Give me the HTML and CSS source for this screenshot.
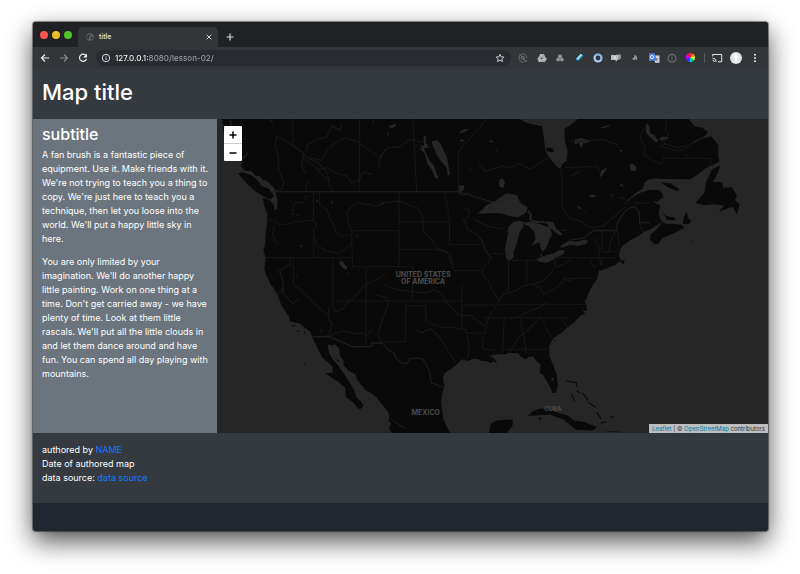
FILE: index.html
```html
<!DOCTYPE html>
<html lang="en">
<head>
<meta charset="utf-8">
<title>title</title>
<link rel="stylesheet" href="styles.css">
</head>
<body>
<div class="window">
  <div class="tabbar">
    <div class="lights"><button class="light red" aria-label="Close window"></button><button class="light yellow" aria-label="Minimize"></button><button class="light green" aria-label="Zoom window"></button></div>
    <div class="tab">
      <svg class="favicon" viewBox="0 0 16 16"><circle cx="8" cy="8" r="7.5" fill="#5d6064"/><path d="M2 5l4-2 3 1-1 3-3 1 1 3-2 2-2-3zM10 8l4-1-1 4-3 2-1-3z" fill="#303438"/></svg>
      <span class="tab-title">title</span>
      <button class="plain tab-close" aria-label="Close tab"><svg viewBox="0 0 8 8"><path d="M1.7 1.7l4.6 4.6M6.3 1.7L1.7 6.3" stroke="#d0d2d4" fill="none"/></svg></button>
    </div>
    <button class="plain new-tab" aria-label="New tab"><svg viewBox="0 0 10 10"><path d="M5 1.5v7M1.5 5h7" stroke="#d8dadc" stroke-width="1.2"/></svg></button>
  </div>
  <div class="toolbar">
    <div class="nav">
      <button class="plain icon" aria-label="Back"><svg viewBox="0 0 14 14"><path d="M11 7H3.5M7 3.5L3.5 7 7 10.500" fill="none" stroke="#eee" stroke-width="1.2"/></svg></button>
      <button class="plain icon" aria-label="Forward"><svg viewBox="0 0 14 14"><path d="M3 7h7.500M7 3.500L10.500 7 7 10.500" fill="none" stroke="#84878a" stroke-width="1.1"/></svg></button>
      <button class="plain icon" aria-label="Reload"><svg viewBox="0 0 14 14"><path d="M10 4.600A3.600 3.600 0 1 0 10.500 8" fill="none" stroke="#eee" stroke-width="1.2"/><path d="M11 2.500v4H7z" fill="#eee"/></svg></button>
    </div>
    <div class="omnibox">
      <svg class="info" viewBox="0 0 10 10"><circle cx="5" cy="5" r="3.700" fill="none" stroke="#d5d7d9"/><path d="M5 4.500V7M5 2.700v1" stroke="#d5d7d9"/></svg>
      <input class="address" type="text" aria-label="Address" value="127.0.0.1:8080/lesson-02/">
      <button class="plain icon" aria-label="Bookmark"><svg viewBox="0 0 14 14"><path d="M7 3.200l1.100 2.600 2.800.2-2.100 1.800.6 2.800L7 9.100l-2.400 1.500.6-2.800L3.100 6l2.800-.2z" fill="none" stroke="#d8dadc" stroke-width=".9"/></svg></button>
    </div>
    <div class="extensions">
      <button class="plain icon" aria-label="Search extension"><svg viewBox="0 0 14 14" fill="none" stroke="#66696c"><path d="M10.500 9A4 4 0 1 1 11 7M3 3l8 8"/><circle cx="7" cy="7" r="1.500"/></svg></button>
      <button class="plain icon" aria-label="Drive"><svg viewBox="0 0 14 14"><path d="M5.300 3h3.500l2.900 5-1.700 3H4L2.300 8z" fill="#a8a8a8"/><path d="M7 5.500L5.500 8h3z" fill="#4a4c4e"/><path d="M5.300 3l3 5.200h3.400M5.500 8.200L4 11" fill="none" stroke="#d8d8d8" stroke-width=".6"/></svg></button>
      <button class="plain icon" aria-label="Clusters"><svg viewBox="0 0 14 14" fill="#929496"><circle cx="7" cy="5.300" r="1.900"/><circle cx="5.200" cy="8.500" r="1.900"/><circle cx="8.800" cy="8.500" r="1.900"/></svg></button>
      <button class="plain icon" aria-label="Pen"><svg viewBox="0 0 14 14"><path d="M9 2.700l2.300 1.800L6.500 9.600 3.800 8.200z" fill="#35b8e6"/><path d="M9 2.700l1 .8-4.800 5.300-1.400-.6z" fill="#b9ecff"/><path d="M3.800 8.200l2.700 1.400-3.500 1.600z" fill="#15517a"/></svg></button>
      <button class="plain icon" aria-label="Ring"><svg viewBox="0 0 14 14"><circle cx="7" cy="7" r="3.500" fill="none" stroke="#a9cff5" stroke-width="2.200"/><path d="M4.200 4.500A3.700 3.700 0 0 1 10 9" fill="none" stroke="#6fa3d8"/></svg></button>
      <button class="plain icon" aria-label="Messages"><svg viewBox="0 0 14 14"><path d="M7 3.500h5v4.300h-1V9L9.500 7.800H7z" fill="#8d8f91"/><path d="M2 4h7.500v5H8v1.500L5.700 9H2z" fill="#bbbcbd"/><circle cx="6" cy="6.500" r="1.200" fill="#e5e5e5"/></svg></button>
      <button class="plain icon" aria-label="Flame"><svg viewBox="0 0 14 14"><path d="M6.800 3.500c2 2 3 3.200 2.300 5L8 9V6.800L7 9H5.300L4.200 7.500l1-1 .6.7z" fill="#96989a"/></svg></button>
      <button class="plain icon" aria-label="Translate"><svg viewBox="0 0 14 14"><path d="M6.500 4.500h6v7.300H8z" fill="#d5d8db"/><path d="M2 2.300h5.500L10 9.700H2z" fill="#4a82ee"/><circle cx="5" cy="6" r="1.600" fill="none" stroke="#fff" stroke-width=".8"/><path d="M8.500 7.500h3M10 7v1l-1.200 2M9.500 8l2 2" fill="none" stroke="#6b7075" stroke-width=".6"/></svg></button>
      <button class="plain icon" aria-label="Page info"><svg viewBox="0 0 14 14" fill="none" stroke="#727578"><circle cx="7" cy="7.300" r="4"/><path d="M7 6.500v3M7 4.600v1"/></svg></button>
      <button class="plain icon" aria-label="Colour picker"><span class="wheel"></span></button>
    </div>
    <span class="divider"></span>
    <div class="tools">
      <button class="plain icon" aria-label="Cast"><svg viewBox="0 0 14 14" fill="none" stroke="#e4e5e6"><path d="M2.700 5.500v-2h9v7.300H8M2.500 7.200A3.700 3.700 0 0 1 6.200 11M2.500 9.200A1.800 1.800 0 0 1 4.300 11"/></svg></button>
      <button class="plain icon" aria-label="Profile"><svg viewBox="0 0 14 14"><circle cx="7" cy="7" r="6" fill="#e3e3e3"/><path d="M5 3.500c3-1.200 5 .6 4 3.400L8 8.500v2.200H6.400V8C4.900 7 4.200 5 5 3.500z" fill="#fff"/></svg></button>
      <button class="plain icon" aria-label="Menu"><svg viewBox="0 0 14 14" fill="#e6e7e8"><circle cx="7" cy="3.800" r="1"/><circle cx="7" cy="7" r="1"/><circle cx="7" cy="10.200" r="1"/></svg></button>
    </div>
  </div>
  <header class="page-header"><h1>Map title</h1></header>
  <main class="content">
    <aside class="sidebar">
      <h2>subtitle</h2>
      <p>A fan brush is a fantastic piece of equipment. Use it. Make friends with it. We're not trying to teach you a thing to copy. We're just here to teach you a technique, then let you loose into the world. We'll put a happy little sky in here.</p>
      <p>You are only limited by your imagination. We'll do another happy little painting. Work on one thing at a time. Don't get carried away - we have plenty of time. Look at them little rascals. We'll put all the little clouds in and let them dance around and have fun. You can spend all day playing with mountains.</p>
    </aside>
    <section class="map">
      <svg class="tiles" viewBox="21 14 1653 942" preserveAspectRatio="xMidYMid slice">
        <!-- mainland -->
        <path class="land" d="M36 14L42 70 66 130 98 132 92 155 104 169 126 172 134 184 150 186 158 198 172 202 186 214 196 228 198 240 203 260 200 284 194 288 190 270 180 258 158 250 163 275 172 300 172 320 168 350 165 390 160 410 167 430 163 460 167 480 175 495 182 512 192 522 200 538 206 550 213 570 225 590 238 608 238 620 270 628 285 640 300 652 307 670 322 700 337 730 355 745 367 757 368 775 348 776 345 768 348 778 364 790 385 802 405 820 407 847 430 864 444 882 453 883 460 873 452 860 440 850 434 832 425 815 412 795 404 780 385 755 368 735 357 715 352 690 367 694 375 690 387 702 390 725 401 740 400 752 415 768 437 780 440 795 462 820 464 826 485 838 500 850 520 875 535 895 538 910 534 920 544 926 537 940 545 956 720 956 700 915 693 865 697 835 703 815 698 790 705 775 720 765 735 755 755 735 772 740 790 733 805 735 815 740 830 740 840 747 850 741 862 748 852 732 838 725 858 720 885 720 895 716 925 717 932 727 945 735 958 727 970 727 981 742 991 750 989 775 998 780 1010 800 1024 826 1027 836 1037 835 1043 815 1041 785 1030 755 1018 725 1017 695 1030 670 1055 655 1070 640 1090 625 1110 605 1125 598 1117 586 1130 590 1128 570 1118 548 1126 560 1140 525 1160 495 1167 467 1190 461 1216 452 1228 441 1240 450 1244 436 1234 441 1226 424 1232 402 1239 393 1262 376 1285 366 1300 353 1325 343 1358 321 1338 346 1320 362 1320 376 1332 389 1344 388 1358 370 1395 355 1422 341 1415 331 1390 328 1370 330 1355 322 1345 300 1350 273 1325 261 1340 262 1358 250 1356 236 1345 227 1320 226 1290 235 1265 250 1237 277 1217 301 1235 280 1255 255 1275 238 1298 222 1303 206 1315 196 1335 193 1370 194 1440 195 1464 180 1485 163 1528 142 1523 123 1525 94 1510 74 1502 66 1472 74 1436 94 1456 79 1484 66 1493 53 1475 40 1454 37 1435 14 1103 14 1080 33 1062 43 1065 85 1073 110 1069 140 1055 150 1051 166 1038 154 1027 142 1012 122 1005 105 1001 70 996 36 955 28 928 14Z"/>
        <!-- islands -->
        <path class="land" d="M85 178L98 174 126 184 142 198 154 214 178 224 192 245 180 256 158 245 135 230 118 215 96 192ZM1352 204L1380 207 1408 225 1400 230 1370 217ZM1357 294L1368 305 1396 310 1394 318 1370 316ZM1418 330L1420 310 1430 292 1433 311 1444 318 1436 329ZM1456 265L1483 235 1487 205 1506 165 1530 154 1522 178 1508 203 1535 204 1540 220 1565 219 1580 244 1574 258 1588 269 1580 301 1568 278 1554 281 1525 293 1542 274 1515 270 1480 273ZM1082 425L1100 420 1118 426ZM1165 465L1198 460 1170 469ZM836 956L842 928 862 918 888 916 908 915 907 935 890 956ZM952 905L970 890 990 882 1015 884 1048 897 1073 903 1092 918 1120 922 1160 938 1148 948 1098 946 1088 938 1060 916 1020 900ZM1178 950L1205 950 1246 954ZM982 912L992 908 992 917Z"/>
        <g fill="none" stroke="#080808" stroke-width="3">
          <path d="M1067 799L1100 805 1100 818M1083 837L1094 862M1100 828l10 10M1118 836l16 22M1134 863l22 16M1160 894l13 20M1172 926l16-3M1198 908l12-1M246 634h10M260 651h8M282 652l3 5M283 748v4M380 736l8 6M1443 379h3"/>
        </g>
        <!-- lakes and inlets -->
        <g class="water" transform="translate(540 0)">
          <path d="M124 82l18-5 10 12 8 18 10 20 5 28 6 25-8 5-3-24-15-18-13-16-8-18zM88 103l13-2 8 20 8 16 14 17 14 39-9-2-12-26-12-17-8-30zM100 68l8-5-1 21 10 16-20 3-8-9 13 1zM327 198l10-6 8 12-5 16-12-3zM263 298l27-26 25-12 34-23 31 5 11 24 21 12-3 16-24 15-25-3-22-8-15-2zM388 320l14 2-3 17-12 17-7 32-10 25 1 15-14 12-10-10-2-28 5-28 6-25 8-10-15 18 8-22 14-13zM405 324l20-2 22 6 21 8 12 5 6 20-10 18-3 12-7 12-10 10-5-14-4-15-8 3-15 7 12-20-3-20-16-18-16-7zM470 320l19 4 9 18 18 16-5 6-20-13-17-16zM439 434l22-9 24-6 24-12 15 1-3 10-24 14-27 13-24-3zM450 421l5-4 1 10-4-1zM510 396l25-17 24 3 24-6 12 3-8 10-23 6-22-3-29 8zM203 211l10 4 8-4 2 13-10 11-10-4 3-8zM8 31l10-1-5 9-11 2zM208 53l14-8 18 1-15 6-16 5zM208 75l18 3-12 5zM299 77l10 3v4h-10zM237 162l7 4-4 2zM316 107l9 2-7 2z"/>
          <path d="M414 290l9 12-3 14 12 6 28 1 20 6" fill="none" stroke="#262626" stroke-width="5"/>
        </g>
        <path class="land" d="M1007 100l20 2 5 8-8 5-14-5z"/>
        <g class="water">
          <path d="M386 442l10-2 16 20-4 7-12-8zM535 35l21-5 2 6-16 5zM531 58l5-6-1 18zM487 20l6 2-3 5zM267 396l12-4-3 6zM364 260h5l-1 12zM318 256l6 2-3 7zM257 480h3v7zM410 474l5 3-1 5zM330 646l8 5-4 3zM518 264l6 2-16 8zM437 362l6 2v6zM1025 791h5v9l-6-2z"/>
        </g>
        <g class="water" transform="translate(1080 0)">
          <path d="M14 76l20-5 22 8 12-2-14 8-15 2-5 16-8-17-12 5zM92 40l25-8 2 3-20 8zM88 192l5-22 16-10-2 9zM180 148l10 2 9 10-3 10-14-1-3-11zM57 242l14-1 8 6-17 2zM120 240l9 3-3 5zM148 214l8-7 2 8 10 5zM18 276l12 2 7 9-9-4zM43 292l5 4-2 4zM147 106l10 1-5 8zM228 28l8 6 5 24 12 5 10 15 14-11 20 3-13 9-18-2-8 8-22-20-9-10z"/>
        </g>
        <path d="M186 157l4 6-7-8z" class="land"/>
        <g class="inlet">
          <path d="M92 135l16-10 4-10M170 210l-4-16M182 222l-3-13M190 235l15-5M194 243l7 40M22 50l14 8M30 25l14 12M22 128l15 14M60 110l25-5M60 15l4 20M180 15l8 12"/>
        </g>
        <!-- state and province borders -->
        <g class="border">
          <path d="M248 14V90L278 115 282 135 316 157 331 178 353 192 360 218 368 230M449 14V232M172 313L195 319 208 332 233 328 250 323 272 321 307 317 320 330 311 345V430M167 430H423M310 232V325M329 232L329 270 352 288 359 315 371 330 377 352 393 365 425 360 427 457H568M427 349H568M311 360L320 392 350 410 385 417 405 405 427 385M250 430V508L356 605M368 430V580M468 457V695M368 560H755M307 668H356L429 697H485V686H517"/>
          <path d="M608 14L620 232M830 14L745 112V215L752 232 775 240 790 247 810 252 835 262 850 262M567 232V457M567 322H714M567 405H670L714 415M540 457H607V483M704 232L712 275 718 320 718 375 718 390 M718 391H820M718 415L722 425 729 465M730 469H818M607 483V560M755 510V645M755 572H855M587 560V682H518M587 574H647V620L670 630 700 640 720 638 756 645 768 646 768 656 776 690 776 715 772 732M768 656H822M820 610H1047L1080 612M867 570H1042L1130 570M882 610L878 715M930 610L946 695V715M945 705H1010M882 705H945"/>
          <path d="M820 391L822 405 840 430 835 445 820 456 817 480 833 500 845 525 858 545 867 560 855 580 840 600 830 625 825 655 815 680 820 705M820 705H852L852 725M895 440V520L887 540M950 438V508M842 418H890M895 438H985M1035 425V460L1060 450 1080 435M1036 430H1150M1060 492H1150M985 610L1000 620 1016 655 1035 680M1047 610L1075 640M960 508L990 520 1000 540 1040 520 1062 495 1077 500 1090 492"/>
          <path d="M1151 350H1216M1175 350V410M1195 410L1202 380 1215 350M1176 412H1228M1174 430H1218M1175 430V455M1150 370L1164 390 1171 450M1228 410L1226 385 1222 345M1288 302L1290 335 1300 350M1170 430L1140 430 1145 450 1160 460M1055 232L1055 280 1070 300 1080 312M1055 165V232M1065 160L1160 157 1171 180M1370 14L1365 45 1375 60 1358 80 1350 95 1370 102 1408 110 1445 94M1308 35L1290 60 1296 85 1305 100 1300 120 1330 140 1355 150 1360 132H1501V152"/>
        </g>
        <g class="border strong">
          <path d="M186 232H745M1055 348H1068M1080 377L1120 372 1151 348H1218L1222 325 1233 307 1248 288 1260 280 1275 278 1288 295 1288 325 1320 325M307 668L356 665 429 697H485V686H517L533 705 552 715 560 735 575 746 590 748 600 732 635 732 646 745 658 770 664 805 703 820M835 262L875 264M745 232L755 242 775 238 790 247 815 253 845 262"/>
        </g>
        <!-- rivers -->
        <g class="river">
          <path d="M295 198L288 210 290 235M200 66L196 90 205 125 207 170 222 205 215 225 195 229M200 66L225 78 250 97 275 110 290 130 325 145 348 170 360 205M278 125L275 152 288 180M288 110L295 90 320 75 350 68 365 35 390 48 396 28M295 130L332 138 344 125 352 105 382 82 404 72 442 82 480 110 510 128 530 102 567 96M317 167L350 160 380 178 410 185 425 205 445 198 462 172 488 182M510 160L505 145 525 105M270 303L245 300 250 280 255 264 280 265 292 242M195 332L188 355 193 380 205 392M427 355L415 330 411 290 440 265 470 270 500 275 520 265 568 260 585 265 600 275 622 280 637 305 640 350 660 370 680 402 710 412 724 448M202 430H240L240 450 210 467 220 510 215 530 230 550 248 567 270 550M202 465L218 490 220 530 202 535 208 550M368 580L378 592 403 580 415 560 432 552 460 515 490 500 530 478M500 543L530 550 535 572 518 610 503 660 516 685M356 580L357 620 367 625 357 660M360 663L400 650 440 658 460 655 470 665 486 645M520 510L555 525 605 532 650 535 672 525 698 540 708 565 745 602 785 605 802 620 825 635M615 645L635 655 660 643 690 670 714 710 737 745M538 100L570 98 600 75 640 85M802 140L825 170 880 155 900 162 925 147 960 165 990 145 1015 130M760 280L777 290 775 310 760 315 772 345 800 360 820 385 825 405 845 435M865 558L880 540 915 530 940 515 970 508 1000 500 1030 465M900 615L935 600 985 580 1010 565M980 620L950 650 925 670 915 690 895 715M795 315L830 335 880 345M1080 82L1130 80 1180 75 1200 85 1225 92M1115 170L1080 185M1080 312L1110 320 1140 340 1180 335 1222 298 1245 278M1270 265L1320 267M1223 249L1250 255M1360 87L1400 100 1430 95M1420 117L1432 127M540 915L555 922 575 937 590 942"/>
        </g>
        <g class="label" text-anchor="middle">
          <text y="487"><tspan x="639">UNITED STATES</tspan><tspan x="639" dy="23">OF AMERICA</tspan></text>
          <text x="647" y="902">MEXICO</text>
          <text x="1028" y="890" class="small">CUBA</text>
        </g>
      </svg>
      <div class="zoom"><button class="plain" aria-label="Zoom in"><svg viewBox="0 0 10 10"><path d="M5 1.500v7M1.500 5h7" stroke="#000" stroke-width="1.500"/></svg></button><button class="plain" aria-label="Zoom out"><svg viewBox="0 0 10 10"><path d="M1.500 5h7" stroke="#000" stroke-width="1.500"/></svg></button></div>
      <div class="attribution"><a href="#">Leaflet</a> | © <a href="#">OpenStreetMap</a> contributors</div>
    </section>
  </main>
  <footer class="page-footer">
    <div>authored by <a href="#">NAME</a></div>
    <div>Date of authored map</div>
    <div>data source: <a href="#">data source</a></div>
  </footer>
</div>
</body>
</html>
```
FILE: styles.css
```css
* { box-sizing: border-box; }
body {
  margin: 0;
  min-height: 100vh;
  padding: 22px 32px 43px 33px;
  display: flex;
  background: #fff;
  color: #fff;
  font: 9px/14px Inter, "Liberation Sans", sans-serif;
}
.window {
  flex: 1;
  min-width: 0;
  display: flex;
  flex-direction: column;
  overflow: hidden;
  border-radius: 3px;
  background: #20272e;
  box-shadow: 0 0 1px 1px rgba(0, 0, 0, .45), 0 10px 26px rgba(0, 0, 0, .7);
}
a { text-decoration: none; color: #0f7bff; }
svg { display: block; }
.plain {
  display: flex;
  align-items: center;
  justify-content: center;
  padding: 0;
  border: 0;
  background: none;
}

/* browser chrome */
.tabbar {
  height: 25px;
  display: flex;
  align-items: flex-end;
  padding-left: 7px;
  background: #202124;
}
.lights { display: flex; gap: 4px; width: 38px; padding-bottom: 8px; }
.light { width: 8px; height: 8px; padding: 0; border: 0; border-radius: 50%; }
.red { background: #fc5650; }
.yellow { background: #e8bd2c; }
.green { background: #52c22b; }
.tab {
  width: 140px;
  height: 20px;
  display: flex;
  align-items: center;
  gap: 5px;
  padding: 0 5px 0 8px;
  border-radius: 5px 5px 0 0;
  background: #323639;
}
.favicon { width: 8px; height: 8px; }
.tab-title { flex: 1; font-size: 7px; font-weight: 500; color: #e4e5e6; }
.tab-close svg { width: 8px; height: 8px; }
.new-tab { width: 24px; height: 20px; }
.new-tab svg { width: 10px; height: 10px; }
.toolbar {
  height: 22px;
  display: flex;
  align-items: center;
  padding: 0 6px 1px 5px;
  background: #323639;
}
.icon, .icon svg { width: 14px; height: 14px; }
.nav, .tools { display: flex; gap: 5px; }
.omnibox {
  flex: 1;
  min-width: 0;
  height: 16px;
  display: flex;
  align-items: center;
  gap: 4px;
  margin: 0 5px 0 6px;
  padding: 0 4px 0 5px;
  border-radius: 8px;
  background: #282b2f;
}
.info { width: 10px; height: 10px; }
.address {
  flex: 1;
  min-width: 0;
  height: 14px;
  padding: 0;
  border: 0;
  outline: 0;
  font: 500 8px/14px Inter, "Liberation Sans", sans-serif;
  color: transparent;
  background: linear-gradient(90deg, #fff 33px, #9ea2a6 33px);
  -webkit-background-clip: text;
  background-clip: text;
}
.extensions { width: 182px; display: flex; justify-content: space-between; }
.wheel {
  width: 9px;
  height: 9px;
  border-radius: 50%;
  background: conic-gradient(#f33 0 12%, #f90 0 20%, #cf3 0 35%, #0c6 0 45%, #0cf 0 55%, #33f 0 70%, #c0f 0 85%, #f06 0);
}
.divider { width: 1px; height: 10px; margin: 0 5px 0 6px; background: #575b5e; }

/* page */
.page-header { padding: 9px 9px 13px; background: #343a40; }
h1, h2, p { margin: 0; }
h1 { font-size: 22px; line-height: 28px; font-weight: 500; }
.content { display: flex; height: 314px; flex: none; }
.sidebar { width: 25%; padding: 5px 6px 5px 9px; background: #6c757d; }
h2 { font-size: 16px; line-height: 20px; font-weight: 500; margin-bottom: 4px; }
p { margin-bottom: 9px; }
.map { position: relative; flex: 1; min-width: 0; overflow: hidden; background: #262626; }
.tiles { width: 100%; height: 100%; }
.land { fill: #090909; }
.water { fill: #262626; }
.inlet { fill: none; stroke: #262626; stroke-width: 3; }
.border { fill: none; stroke: #171717; stroke-width: 3; }
.strong { stroke: #202020; }
.river { fill: none; stroke: #191919; stroke-width: 3; stroke-linejoin: round; }
.label { fill: #4c4c4c; font-size: 21px; font-weight: 700; }
.small { font-size: 18px; }
.zoom {
  position: absolute;
  top: 7px;
  left: 7px;
  width: 18px;
  border-radius: 1px;
  background: #fff;
}
.zoom button { width: 18px; height: 17px; }
.zoom button + button { height: 18px; border-top: 1px solid #ccc; }
.zoom svg { width: 10px; height: 10px; }
.attribution {
  position: absolute;
  right: 0;
  bottom: 0;
  padding: 0 3px;
  background: #bebebe;
  color: #333;
  font: 6px/9px Inter, "Liberation Sans", sans-serif;
}
.attribution a { color: #0078a8; }
.page-footer { padding: 10px 9px 18px; background: #343a40; }
```
